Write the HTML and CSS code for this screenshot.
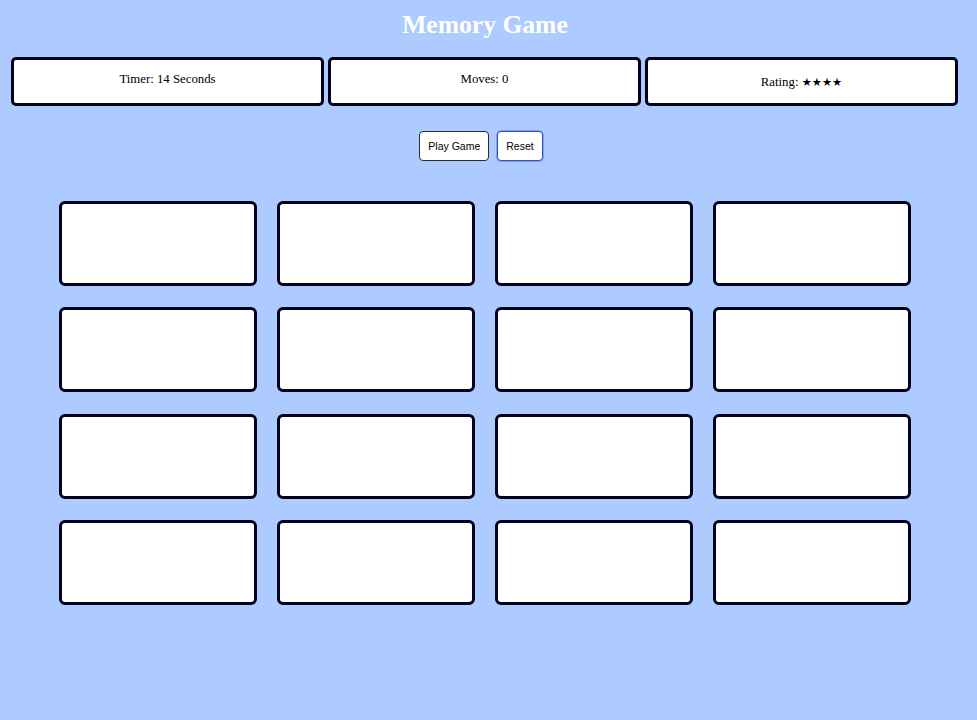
FILE: index.html
```html
<!DOCTYPE html>
<html lang="en">
<head>
<meta charset="utf-8">
<title>Memory Game</title>
<link rel="stylesheet" href="styles.css">
</head>
<body>
<div class="page">
  <h1 class="title">Memory Game</h1>
  <div class="stats">
    <div class="stat">Timer: 14 Seconds</div>
    <div class="stat">Moves: 0</div>
    <div class="stat stat-rating">Rating: <span class="stars">★★★★</span></div>
  </div>
  <div class="controls">
    <button class="btn">Play Game</button>
    <button class="btn btn-focus">Reset</button>
  </div>
  <div class="board">
    <div class="card"></div><div class="card"></div><div class="card"></div><div class="card"></div>
    <div class="card"></div><div class="card"></div><div class="card"></div><div class="card"></div>
    <div class="card"></div><div class="card"></div><div class="card"></div><div class="card"></div>
    <div class="card"></div><div class="card"></div><div class="card"></div><div class="card"></div>
  </div>
</div>
</body>
</html>
```
FILE: styles.css
```css
html, body {
  margin: 0;
  padding: 0;
  background: #aecbff;
}
body {
  font-family: "Liberation Serif", "Times New Roman", serif;
  color: #000;
  min-height: 720px;
}
.page {
  width: 970px;
}
.title {
  margin: 0;
  padding-top: 11px;
  font-size: 25.6px;
  line-height: 28px;
  font-weight: bold;
  color: #fff;
  text-align: center;
}
.stats {
  display: flex;
  gap: 4px;
  margin-top: 18px;
  padding-left: 11px;
}
.stat {
  box-sizing: border-box;
  width: 313px;
  height: 49px;
  border: 3px solid #02021a;
  border-radius: 5px;
  background: #fff;
  font-size: 12.8px;
  line-height: 15px;
  text-align: center;
  padding-top: 12px;
}
.stat-rating {
  padding-top: 15px;
}
.stars {
  font-family: "DejaVu Sans", sans-serif;
  font-size: 11.3px;
}
.controls {
  display: flex;
  justify-content: center;
  gap: 8px;
  margin-top: 25px;
  padding-right: 8px;
}
.btn {
  box-sizing: border-box;
  height: 30px;
  padding: 0 8px;
  background: #fff;
  color: #000;
  border: 1px solid #2a2a2a;
  border-radius: 4px;
  font-family: "Liberation Sans", Arial, sans-serif;
  font-size: 10.5px;
}
.btn-focus {
  border-color: #2f55b8;
  box-shadow: 0 0 0 1px rgba(70, 110, 220, 0.45);
}
.board {
  display: grid;
  grid-template-columns: repeat(4, 198px);
  grid-auto-rows: 85px;
  column-gap: 20px;
  row-gap: 21.33px;
  justify-content: center;
  margin-top: 40px;
}
.card {
  box-sizing: border-box;
  background: #fff;
  border: 3px solid #02021a;
  border-radius: 6px;
}
```
